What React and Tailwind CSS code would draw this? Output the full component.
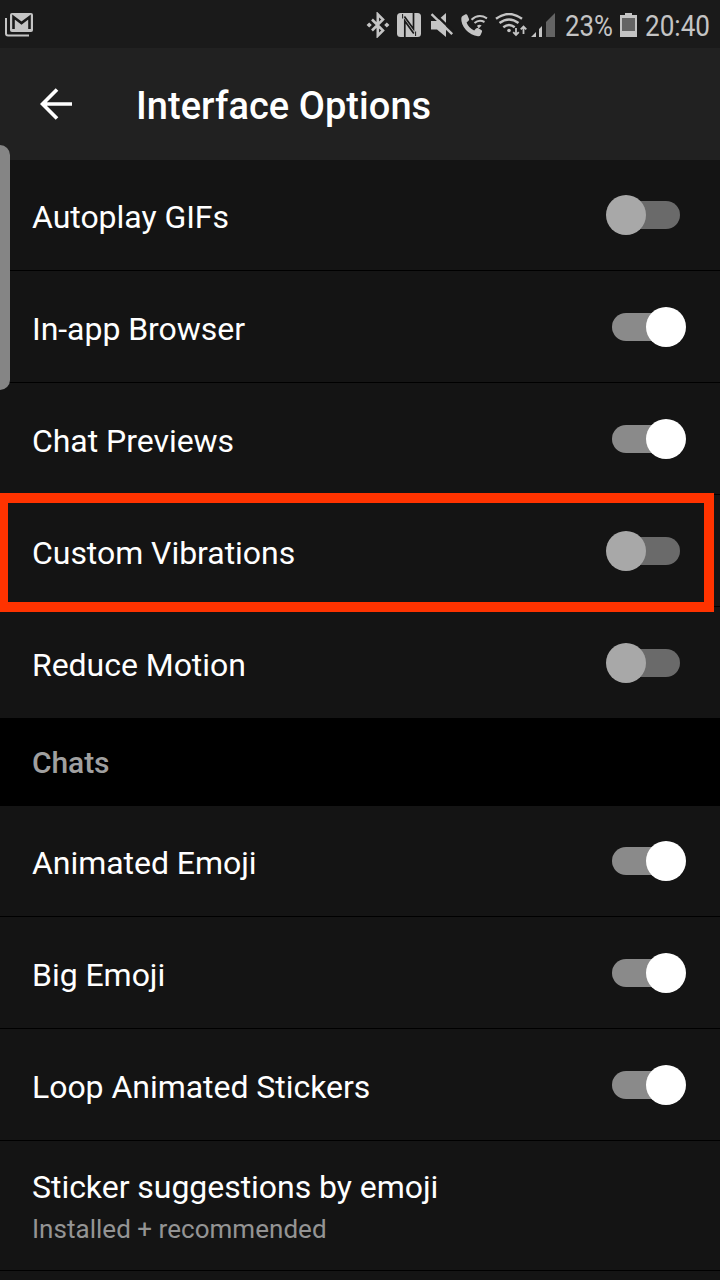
const generalOptions = [
  { label: "Autoplay GIFs", enabled: false },
  { label: "In-app Browser", enabled: true },
  { label: "Chat Previews", enabled: true },
  { label: "Custom Vibrations", enabled: false, highlighted: true },
  { label: "Reduce Motion", enabled: false },
];

const chatOptions = [
  { label: "Animated Emoji", enabled: true },
  { label: "Big Emoji", enabled: true },
  { label: "Loop Animated Stickers", enabled: true },
];

const GmailIcon = () => (
  <svg className="h-6 w-7 mt-0.5 ml-[5px]" viewBox="0 0 28 24" fill="none">
    <path d="M1 5v15.500a2 2 0 0 0 2 2h21" stroke="#c4c4c4" strokeWidth="2" />
    <rect x="5" y="0" width="23" height="19" rx="2" fill="#c4c4c4" />
    <path d="M8.500 16V4l8 6 8-6v12" stroke="#1a1a1a" strokeWidth="2.600" />
  </svg>
);

const BluetoothIcon = () => (
  <svg className="h-[26px] w-6" viewBox="0 0 24 26" fill="none" stroke="#c4c4c4" strokeWidth="2.600">
    <path d="m6 7.500 11 11-5.200 5.200V2.300L17 7.500l-11 11" />
    <path d="m.6 13 2.600-2.600L5.800 13l-2.600 2.600zM18.200 13l2.600-2.600 2.600 2.600-2.600 2.600z" fill="#c4c4c4" stroke="none" />
  </svg>
);

const NfcIcon = () => (
  <svg className="h-6 w-6 ml-[7px]" viewBox="0 0 24 24" fill="none">
    <rect width="24" height="24" rx="3.500" fill="#c4c4c4" />
    <path d="M7.800 24V8l9 12.500" stroke="#1a1a1a" strokeWidth="1.700" />
    <path d="M16.500 0v16L7.400 3.500" stroke="#1a1a1a" strokeWidth="1.700" />
    <path d="M5.600 1v4.500" stroke="#1a1a1a" strokeWidth="1" />
    <path d="M18.600 18.500V23" stroke="#1a1a1a" strokeWidth="1" />
  </svg>
);

const MuteIcon = () => (
  <svg className="h-6 w-6 ml-[9px]" viewBox="0 0 24 24">
    <path d="M1 8h6l9-8v24l-9-7.500H1z" fill="#c4c4c4" />
    <path d="M3.600-.4 24.200 19.400" stroke="#1a1a1a" strokeWidth="2.400" />
    <path d="m1.500 1.200 20.700 20" stroke="#c4c4c4" strokeWidth="2.400" />
  </svg>
);

const WifiCallIcon = () => (
  <svg className="h-6 w-[27px] ml-[7px]" viewBox="0 0 27 24" fill="none">
    <path
      d="M1.500 3 4.600 1.300q1.200-.5 1.700.7l1.700 4q.4 1-.5 1.800L5.600 9.500q2 5.500 7.600 8l1.800-2q.8-.9 1.900-.4l3.400 1.800q1.200.6.7 1.800l-1.400 3.300Q19 23.500 17 23.300 10 22.500 5 17T.300 5.500Q.300 3.700 1.500 3z"
      fill="#c4c4c4"
    />
    <path d="M10.500 6.800q7-6.600 15.500-1.500M13.500 10q4.500-4 10-1" stroke="#c4c4c4" strokeWidth="2" />
    <path d="M16 12.700q2-1.500 4.600-.3l-2.900 3z" fill="#c4c4c4" />
  </svg>
);

const WifiIcon = () => (
  <svg className="h-6 w-8 ml-[7px]" viewBox="0 0 32 24" fill="none">
    <path d="M1 5.800q13-9.600 26 0M4.500 10q9.500-7.200 19 0M8.300 14.200q5.700-4.500 11.400 0" stroke="#c4c4c4" strokeWidth="2.400" />
    <circle cx="14" cy="17.500" r="1.800" fill="#c4c4c4" />
    <path d="M21 15v7M18.200 19.200 21 22l2.800-2.800M28.500 21v-7M25.700 16.300l2.800-2.800 2.800 2.800" stroke="#c4c4c4" strokeWidth="1.800" />
  </svg>
);

const SignalIcon = () => (
  <svg className="h-6 w-6 ml-1" viewBox="0 0 24 24">
    <path d="M0 24 5 19v5zM8 24v-8l3-3v11z" fill="#c4c4c4" />
    <path d="M15 24V9L24 0v24z" fill="#646464" />
  </svg>
);

const BatteryIcon = () => (
  <svg className="h-6 w-[17px] ml-2" viewBox="0 0 17 24">
    <path d="M5 0h7v2h5v22H0V2h5z" fill="#c4c4c4" />
    <path d="M2 5h13v13H2z" fill="#646464" />
  </svg>
);

const StatusBar = () => (
  <div className="flex h-12 items-center bg-[#1a1a1a] text-[30px] text-[#c4c4c4]">
    <GmailIcon />
    <div className="ml-auto flex items-center pt-0.5 pr-[9px]">
      <BluetoothIcon />
      <NfcIcon />
      <MuteIcon />
      <WifiCallIcon />
      <WifiIcon />
      <SignalIcon />
      <div className="ml-[9px] w-12">
        <span className="inline-block origin-left translate-x-px scale-x-[0.86]">23%</span>
      </div>
      <BatteryIcon />
      <div className="ml-2 w-[66px]">
        <span className="inline-block origin-left scale-x-[0.87]">20:40</span>
      </div>
    </div>
  </div>
);

const Toggle = ({ enabled }) => (
  <div className={`relative mr-2 h-7 w-[68px] rounded-full ${enabled ? "bg-[#8a8a8a]" : "bg-[#6a6a6a]"}`}>
    <div
      className={`absolute -top-1.5 h-10 w-10 rounded-full ${enabled ? "-right-1.5 bg-white" : "-left-1.5 bg-[#a8a8a8]"}`}
    />
  </div>
);

const OptionRow = ({ label, enabled, highlighted }) => (
  <div className="relative flex h-28 items-center justify-between border-b border-black bg-[#141414] px-8">
    <span className="pt-1 text-[32px] leading-10 tracking-[-0.04px] text-white">{label}</span>
    <Toggle enabled={enabled} />
    {highlighted && (
      <div className="absolute -top-[2px] -left-[2px] z-10 h-[119px] w-[716px] border-[10px] border-[#ff3300]" />
    )}
  </div>
);

const App = () => {
  return (
    <div className="relative flex h-[1280px] w-[720px] flex-col overflow-hidden bg-[#141414] font-['Roboto',sans-serif]">
      <StatusBar />

      <header className="relative z-10 flex h-28 shrink-0 items-center bg-[#212121] pl-10">
        <svg className="h-8 w-8" viewBox="0 0 32 32" fill="none" stroke="#ffffff" strokeWidth="3.700">
          <path d="M32 16H3M17 1.500 2.500 16 17 30.500" />
        </svg>
        <h1 className="ml-16 pt-1 text-[38px] font-medium tracking-[0.05px] text-white">Interface Options</h1>
      </header>

      <section className="-mt-px">
        {generalOptions.map((option) => (
          <OptionRow key={option.label} {...option} />
        ))}
      </section>

      <h2 className="relative z-10 flex h-[87px] shrink-0 items-center bg-black pl-8 text-[30px] font-medium tracking-[-0.1px] text-[#a0a0a0]">
        Chats
      </h2>

      <section className="-mt-px">
        {chatOptions.map((option) => (
          <OptionRow key={option.label} {...option} />
        ))}
        <div className="h-[130px] border-b border-black pl-8 pt-[26px]">
          <div className="text-[32px] leading-10 tracking-[-0.04px] text-white">Sticker suggestions by emoji</div>
          <div className="mt-1 text-[26px] leading-9 tracking-[0.03px] text-[#949494]">Installed + recommended</div>
        </div>
      </section>

      {/* edge panel handle */}
      <div className="absolute top-[145px] left-0 z-20 h-[245px] w-[10px] rounded-r-[10px] bg-[#858585]" />
    </div>
  );
};

export default App;
